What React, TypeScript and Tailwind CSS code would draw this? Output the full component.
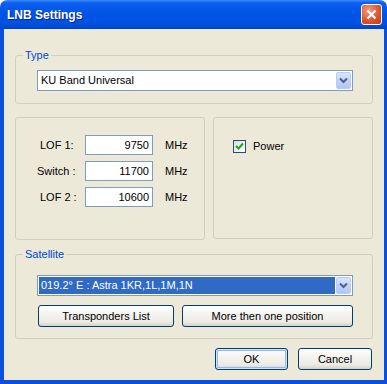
import React from 'react';

function Chevron() {
  return (
    <svg width="9" height="7" viewBox="0 0 9 7">
      <path d="M1 1.5 L4.5 5 L8 1.5" fill="none" stroke="#4d6185" strokeWidth="2" />
    </svg>
  );
}

function Combo({ value, selected }: { value: string; selected?: boolean }) {
  return (
    <div className="flex h-[21px] w-[316px] items-stretch border border-[#7f9db9] bg-white p-[1px]">
      <div
        className={`flex flex-1 items-center pl-[2px] ${selected ? 'bg-[#316ac5] text-white' : 'text-black'}`}
      >
        {value}
      </div>
      <div className="ml-[1px] flex w-[15px] items-center justify-center rounded-[2px] border border-[#b9ccf6] bg-[linear-gradient(to_bottom,#d9e5fd,#c1d3fb_50%,#b1c6f6)]">
        <Chevron />
      </div>
    </div>
  );
}

function Group({ legend, className, children }: { legend?: string; className: string; children: React.ReactNode }) {
  return (
    <div className={`relative rounded-[3px] border border-[#d0d0bf] ${className}`}>
      {legend && (
        <span className="absolute left-[7px] top-[-8px] bg-[#ece9d8] px-[2px] leading-[14px] text-[#0046d5]">
          {legend}
        </span>
      )}
      {children}
    </div>
  );
}

function XpButton({ label, className, isDefault }: { label: string; className: string; isDefault?: boolean }) {
  return (
    <button
      className={`flex items-center justify-center rounded-[3px] border border-[#003c74] bg-[linear-gradient(to_bottom,#ffffff,#f4f3ee_40%,#ecebe4_80%,#d6d0c5)] text-black ${isDefault ? 'shadow-[inset_0_0_0_1px_#cee7ff,inset_0_0_0_2px_#98b8ea]' : ''} ${className}`}
    >
      {label}
    </button>
  );
}

function LofRow({ label, value, pad }: { label: string; value: string; pad: string }) {
  return (
    <div className="flex h-[20px] items-center">
      <span className={`w-[69px] ${pad}`}>{label}</span>
      <div className="flex h-[20px] w-[68px] items-center justify-end border border-[#7f9db9] bg-white pr-[3px]">
        {value}
      </div>
      <span className="ml-[12px]">MHz</span>
    </div>
  );
}

export default function App() {
  return (
    <div className="h-[384px] w-[387px] bg-white font-['Liberation_Sans',Arial,sans-serif] text-[11px] text-black">
      <div className="flex h-full flex-col">
        {/* Title bar */}
        <div className="flex h-[29px] items-center justify-between rounded-t-[7px] bg-[linear-gradient(to_bottom,#3b8cf8_0%,#0a5ef0_10%,#0055e5_45%,#0052e0_80%,#0043cf_100%)] pl-[7px] pr-[5px]">
          <span className="text-[12px] font-bold text-white [text-shadow:1px_1px_#0a1e8a]">LNB Settings</span>
          <div className="flex h-[21px] w-[21px] items-center justify-center rounded-[3px] border border-white bg-[radial-gradient(circle_at_35%_30%,#f0a080,#e0542f_55%,#c23a17)]">
            <svg width="11" height="11" viewBox="0 0 11 11">
              <path d="M1.5 1.5 L9.5 9.5 M9.5 1.5 L1.5 9.5" stroke="white" strokeWidth="2.2" />
            </svg>
          </div>
        </div>

        {/* Body */}
        <div className="flex flex-1 flex-col border-b-4 border-l-4 border-r-[3px] border-[#0a4fe0] bg-[#ece9d8] pl-[11px] pr-[11px] pt-[26px]">
          {/* Type */}
          <Group legend="Type" className="h-[49px] w-[358px] pl-[21px] pt-[14px]">
            <Combo value="KU Band Universal" />
          </Group>

          <div className="mt-[13px] flex gap-[8px]">
            {/* LOF */}
            <Group className="flex h-[123px] w-[190px] flex-col gap-[6px] pt-[17px]">
              <LofRow label="LOF 1:" value="9750" pad="pl-[24px]" />
              <LofRow label="Switch :" value="11700" pad="pl-[21px]" />
              <LofRow label="LOF 2 :" value="10600" pad="pl-[24px]" />
            </Group>

            {/* Power */}
            <Group className="h-[122px] w-[160px] pl-[19px] pt-[20px]">
              <div className="flex items-center gap-[7px]">
                <div className="flex h-[13px] w-[13px] items-center justify-center border border-[#1c5180] bg-[linear-gradient(135deg,#dcdcd7,#ffffff)]">
                  <svg width="9" height="9" viewBox="0 0 9 9">
                    <path d="M1 4 L3.5 6.5 L8 1.5" fill="none" stroke="#21a121" strokeWidth="2" />
                  </svg>
                </div>
                <span>Power</span>
              </div>
            </Group>
          </div>

          {/* Satellite */}
          <Group legend="Satellite" className="mt-[14px] h-[85px] w-[358px] pl-[21px] pt-[20px]">
            <Combo value="019.2° E : Astra 1KR,1L,1M,1N" selected />
            <div className="mt-[9px] flex gap-[8px] pl-[1px]">
              <XpButton label="Transponders List" className="h-[22px] w-[136px]" />
              <XpButton label="More then one position" className="h-[22px] w-[171px]" />
            </div>
          </Group>

          {/* OK / Cancel */}
          <div className="mt-[9px] flex justify-end gap-[10px] pr-[1px]">
            <XpButton label="OK" className="h-[22px] w-[73px]" isDefault />
            <XpButton label="Cancel" className="h-[22px] w-[74px]" />
          </div>
        </div>
      </div>
    </div>
  );
}
